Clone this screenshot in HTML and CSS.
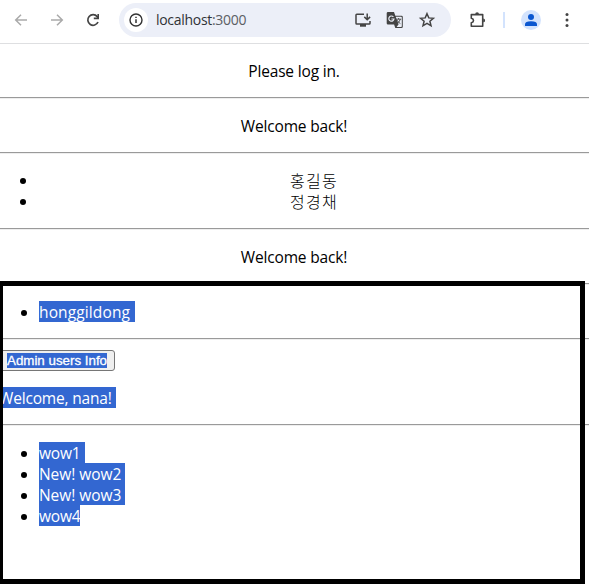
FILE: index.html
```html
<!DOCTYPE html>
<html lang="ko">
<head>
<meta charset="utf-8">
<title>localhost:3000</title>
<link rel="stylesheet" href="styles.css">
</head>
<body>
<header class="toolbar">
  <svg class="icon back" viewBox="0 0 16 16"><path d="M14 8H3M8 2.7 2.7 8 8 13.3" fill="none" stroke="#aaa" stroke-width="1.5"/></svg>
  <svg class="icon forward" viewBox="0 0 16 16"><path d="M2 8h11M8 2.7 13.3 8 8 13.3" fill="none" stroke="#aaa" stroke-width="1.5"/></svg>
  <svg class="icon reload" viewBox="0 0 16 16"><path d="M13 10a5.3 5.3 0 1 1-.8-5.4L13.4 6" fill="none" stroke="#444" stroke-width="1.7"/><path d="M14 2v5.2H8.8V5.6h3.6V2z" fill="#444"/></svg>
  <div class="address">
    <span class="site"><svg class="icon" viewBox="0 0 16 16"><circle cx="8" cy="8" r="6" fill="none" stroke="#333" stroke-width="1.4"/><path d="M7.25 7.2h1.5V11h-1.5zM7.25 4.7h1.5v1.4h-1.5z" fill="#333"/></svg></span>
    <span class="url">localhost<span class="port">:3000</span></span>
    <svg class="icon install" viewBox="0 0 18 18"><path d="M10 3.3H2.8q-.8 0-.8.8v8.1q0 .8.8.8h12.4q.8 0 .8-.8V10M13.2 2.5v6M10.3 5.9l2.9 2.9 2.9-2.9" fill="none" stroke="#444" stroke-width="1.5"/><path d="M6 13h6v2.7H6z" fill="#444"/></svg>
    <svg class="icon translate" viewBox="0 0 18 18"><path d="M2 1h6l1.3 3.8h6.2q1.3 0 1.3 1.3v9.6q0 1.3-1.3 1.3H9.3L8.1 13.5H2q-1.3 0-1.3-1.3V2.3Q.7 1 2 1z" fill="#444"/><path d="M9.7 5.8h5.4q.7 0 .7.7v8.8q0 .7-.7.7h-4.5l2-2.7z" fill="#eceff8"/><path d="M7.4 5.9A2.6 2.6 0 1 0 8 8H5.4" fill="none" stroke="#eceff8" stroke-width="1.2"/><path d="M10.2 8.2h5M12.6 7v1.2M14.3 8.2q-.6 2.4-3 4.2M11.2 9.2q1.2 2.3 3.2 3.4" fill="none" stroke="#444" stroke-width=".9"/></svg>
    <svg class="icon star" viewBox="0 0 18 18"><path d="m9 2.7 1.8 4.2 4.6.4-3.5 3 1.1 4.5L9 12.4l-4 2.4 1.1-4.5-3.5-3 4.6-.4z" fill="none" stroke="#444" stroke-width="1.5"/></svg>
  </div>
  <svg class="icon puzzle" viewBox="0 0 18 18"><path d="M2.3 3.6h11.4v11.7H2.3v-3.5q2.2-.5 2.2-2.3T2.3 7.2z" fill="none" stroke="#444" stroke-width="1.6" stroke-linejoin="round"/><path d="M6.2 3.2a1.9 1.9 0 0 1 3.8 0zM14.2 7.5a1.9 1.9 0 0 1 0 3.8z" fill="#444"/></svg>
  <span class="divider"></span>
  <svg class="profile" viewBox="0 0 20 20"><circle cx="10" cy="10" r="10" fill="#d3e3fd"/><circle cx="10" cy="7" r="3" fill="#0b57d0"/><path d="M4 16v-1.8q0-3 6-3t6 3V16z" fill="#0b57d0"/></svg>
  <svg class="icon more" viewBox="0 0 16 16"><g fill="#444"><circle cx="8" cy="2.5" r="1.5"/><circle cx="8" cy="8" r="1.5"/><circle cx="8" cy="13.5" r="1.5"/></g></svg>
</header>
<main class="page">
  <p class="centered">Please log in.</p>
  <hr>
  <p class="centered">Welcome back!</p>
  <hr>
  <ul class="centered korean"><li>홍길동</li><li>정경채</li></ul>
  <hr>
  <p class="centered">Welcome back!</p>
  <hr>
  <ul><li><span class="selected name">honggildong</span></li></ul>
  <hr class="tight">
  <button type="button"><span class="selected">Admin users Info</span></button>
  <p class="flush"><span class="selected welcome">Welcome, nana!</span></p>
  <hr>
  <ul>
    <li><span class="selected wow">wow1</span></li>
    <li><span class="selected new">New! wow2</span></li>
    <li><span class="selected new">New! wow3</span></li>
    <li><span class="selected last">wow4</span></li>
  </ul>
</main>
<div class="frame"></div>
</body>
</html>
```
FILE: styles.css
```css
* { box-sizing: border-box; }
body { margin: 0; height: 585px; overflow: hidden; background: #fff; color: #000; font: 16px/21px "Open Sans", "Noto Sans CJK KR", sans-serif; }
.toolbar { display: flex; align-items: center; height: 44px; padding: 0 0 4px 13px; border-bottom: 1px solid #dedfe1; }
.icon { display: block; flex: none; width: 16px; height: 16px; }
.forward { margin-left: 20px; }
.reload { margin-left: 20px; }
.address { display: flex; align-items: center; flex: none; width: 332px; height: 34px; margin-left: 18px; padding-left: 5px; border-radius: 17px; background: #eceff8; }
.site { display: flex; align-items: center; justify-content: center; width: 24px; height: 24px; border-radius: 50%; background: #fff; }
.url { width: 198px; margin-left: 8px; font-size: 14px; letter-spacing: -.3px; color: #303236; }
.port { color: #5b5e64; }
.install, .translate, .star, .puzzle { width: 18px; height: 18px; }
.translate, .star { margin-left: 14px; }
.puzzle { margin-left: 18px; }
.divider { width: 2px; height: 16px; margin-left: 16px; background: #d3e3fd; }
.profile { width: 20px; height: 20px; margin-left: 16px; }
.more { margin-left: 18px; }
.page { width: 590px; margin-left: -1px; font-size: 15.5px; letter-spacing: -.17px; }
p { margin: 16px 0; height: 21px; line-height: 23px; }
.flush { line-height: 21px; }
ul { margin: 16px 0; padding-left: 40px; }
li { height: 21px; line-height: 23px; }
hr { height: 2px; margin: 16px 0; border: 0; border-top: 1px solid #9a9a9a; border-bottom: 1px solid #eee; }
.centered { text-align: center; }
.korean { font-family: "Noto Sans CJK KR", sans-serif; font-weight: 300; font-size: 16px; letter-spacing: 1.2px; }
.korean li { line-height: 21px; }
.selected { display: inline-block; height: 21px; line-height: 23px; vertical-align: top; white-space: nowrap; background: #3367d1; color: #fff; }
.name { width: 96px; letter-spacing: .12px; }
.welcome { width: 117px; }
.wow { width: 46px; }
.new { width: 86px; letter-spacing: -.05px; }
.last { width: 41px; }
.tight { margin-bottom: 10px; }
button { display: block; width: 116px; height: 21px; margin: 0; padding: 0 0 0 7px; border: 1px solid #767676; border-radius: 3px; background: #efefef; text-align: left; font: 13.333px/15px "Liberation Sans", sans-serif; }
button .selected { display: block; width: 100px; height: 15px; line-height: 15px; -webkit-text-stroke: .3px #fff; }
.frame { position: absolute; left: -2px; top: 281px; width: 587px; height: 303px; border: 5px solid #000; }
```
